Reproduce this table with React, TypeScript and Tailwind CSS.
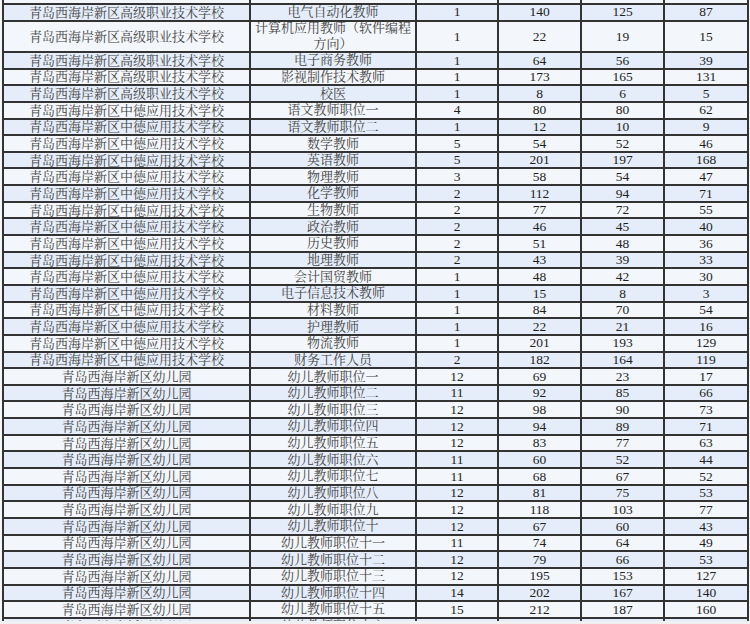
import React from "react";

type Row = [string, string, string, string, string, string];

const G = "青岛西海岸新区高级职业技术学校";
const Z = "青岛西海岸新区中德应用技术学校";
const Y = "青岛西海岸新区幼儿园";

const rows: Row[] = [
  [G, "电气自动化教师", "1", "140", "125", "87"],
  [G, "计算机应用教师（软件编程方向）", "1", "22", "19", "15"],
  [G, "电子商务教师", "1", "64", "56", "39"],
  [G, "影视制作技术教师", "1", "173", "165", "131"],
  [G, "校医", "1", "8", "6", "5"],
  [Z, "语文教师职位一", "4", "80", "80", "62"],
  [Z, "语文教师职位二", "1", "12", "10", "9"],
  [Z, "数学教师", "5", "54", "52", "46"],
  [Z, "英语教师", "5", "201", "197", "168"],
  [Z, "物理教师", "3", "58", "54", "47"],
  [Z, "化学教师", "2", "112", "94", "71"],
  [Z, "生物教师", "2", "77", "72", "55"],
  [Z, "政治教师", "2", "46", "45", "40"],
  [Z, "历史教师", "2", "51", "48", "36"],
  [Z, "地理教师", "2", "43", "39", "33"],
  [Z, "会计国贸教师", "1", "48", "42", "30"],
  [Z, "电子信息技术教师", "1", "15", "8", "3"],
  [Z, "材料教师", "1", "84", "70", "54"],
  [Z, "护理教师", "1", "22", "21", "16"],
  [Z, "物流教师", "1", "201", "193", "129"],
  [Z, "财务工作人员", "2", "182", "164", "119"],
  [Y, "幼儿教师职位一", "12", "69", "23", "17"],
  [Y, "幼儿教师职位二", "11", "92", "85", "66"],
  [Y, "幼儿教师职位三", "12", "98", "90", "73"],
  [Y, "幼儿教师职位四", "12", "94", "89", "71"],
  [Y, "幼儿教师职位五", "12", "83", "77", "63"],
  [Y, "幼儿教师职位六", "11", "60", "52", "44"],
  [Y, "幼儿教师职位七", "11", "68", "67", "52"],
  [Y, "幼儿教师职位八", "12", "81", "75", "53"],
  [Y, "幼儿教师职位九", "12", "118", "103", "77"],
  [Y, "幼儿教师职位十", "12", "67", "60", "43"],
  [Y, "幼儿教师职位十一", "11", "74", "64", "49"],
  [Y, "幼儿教师职位十二", "12", "79", "66", "53"],
  [Y, "幼儿教师职位十三", "12", "195", "153", "127"],
  [Y, "幼儿教师职位十四", "14", "202", "167", "140"],
  [Y, "幼儿教师职位十五", "15", "212", "187", "160"],
  [Y, "幼儿教师职位十六", "", "", "", ""],
];

const cjk = {
  fontFamily:
    '"Liberation Serif", "Noto Serif CJK SC", "Noto Sans CJK SC", serif',
};

function Cells({ r }: { r: Row }) {
  const isLong = r[1].length > 12;
  return (
    <>
      <div className="w-[247px] shrink-0 border-l-2 border-[#333] flex items-center justify-center text-[13px] leading-none text-[#444]">
        {r[0]}
      </div>
      <div className="w-[166px] shrink-0 border-l-2 border-[#333] flex items-center justify-center text-center text-[13px] leading-[16px] text-[#444]">
        {isLong ? (
          <span>
            计算机应用教师（软件编程
            <br />
            方向）
          </span>
        ) : (
          r[1]
        )}
      </div>
      <div className="w-[82px] shrink-0 border-l-2 border-[#333] flex items-center justify-center text-[13.5px] leading-none text-[#1f1f1f]">
        {r[2]}
      </div>
      <div className="w-[83px] shrink-0 border-l-2 border-[#333] flex items-center justify-center text-[13.5px] leading-none text-[#1f1f1f]">
        {r[3]}
      </div>
      <div className="w-[83px] shrink-0 border-l-2 border-[#333] flex items-center justify-center text-[13.5px] leading-none text-[#1f1f1f]">
        {r[4]}
      </div>
      <div className="w-[86px] shrink-0 border-x-2 border-[#333] flex items-center justify-center text-[13.5px] leading-none text-[#1f1f1f]">
        {r[5]}
      </div>
    </>
  );
}

export default function App() {
  return (
    <div
      className="w-[750px] h-[624px] bg-[#f0f0f0] overflow-hidden"
      style={cjk}
    >
      <div className="h-[621px] overflow-hidden bg-[#f5f6f8] pl-[2px]">
        <div className="w-[747px] flex flex-col">
          <div className="h-[2.5px] flex bg-[#f3f6fa]">
            <Cells r={["", "", "", "", "", ""]} />
          </div>
          {rows.map((r, i) => {
            const h =
              i === 0 ? "h-[17px]" : i === 1 ? "h-[31.5px]" : "h-[16.65px]";
            const bg = i % 2 === 0 ? "bg-[#e4edf9]" : "bg-[#f3f6fa]";
            return (
              <div
                key={i}
                className={`${h} ${bg} shrink-0 flex border-t-2 border-[#333]`}
              >
                <Cells r={r} />
              </div>
            );
          })}
        </div>
      </div>
    </div>
  );
}
